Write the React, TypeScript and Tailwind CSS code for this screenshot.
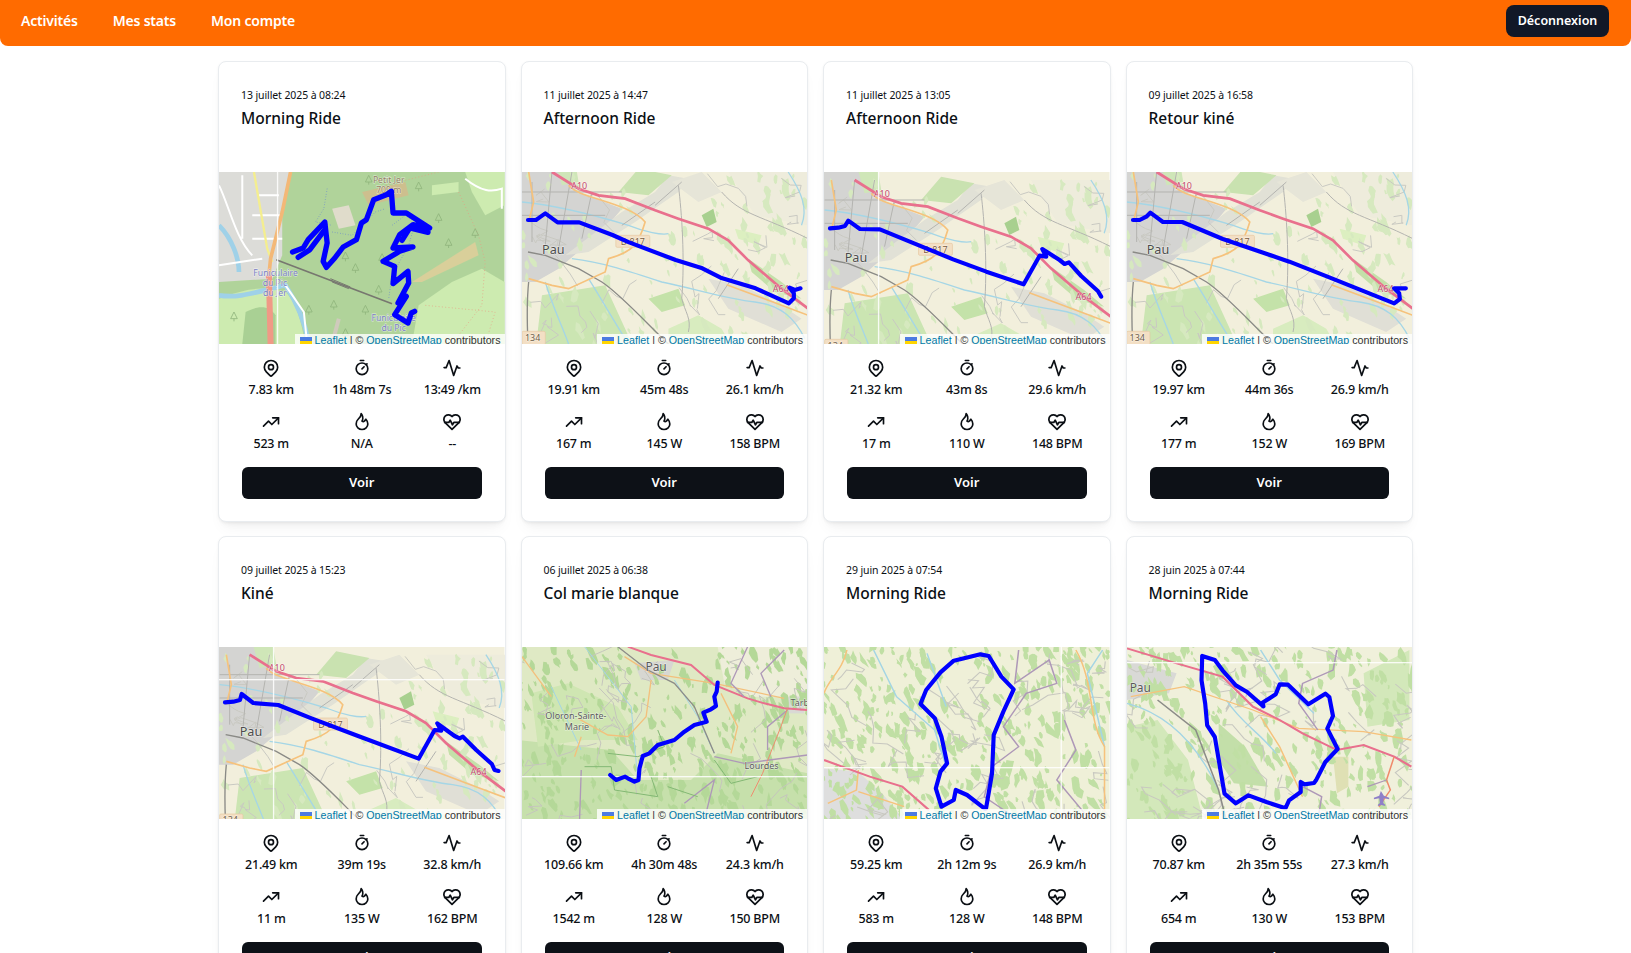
import type { ReactNode } from 'react'
import { TbFlame, TbMapPin, TbStopwatch, TbTrendingUp } from 'react-icons/tb'

const NAV = ['Activités', 'Mes stats', 'Mon compte']
const FONT = { fontFamily: '"Noto Sans", sans-serif' }

type Ride = {
  date: string
  title: string
  stats: string[]
  map: ReactNode
  track: string[]
  width?: number
  seams?: { x?: number; y?: number }
}

// petit générateur déterministe pour la texture des tuiles
function rng(seed: number) {
  let s = seed
  return () => {
    s = (s * 16807) % 2147483647
    return s / 2147483647
  }
}

function Texture({ seed, patches, lines, green = '#c6e2a8', line = '#cfcfc4' }: { seed: number; patches: number; lines: number; green?: string; line?: string }) {
  const r = rng(seed)
  // taches irrégulières plutôt que des ellipses
  const blobs = Array.from({ length: patches }, () => {
    const x = r() * 1000
    const y = r() * 560
    const size = 4 + r() * 12
    const slant = r() * 1.2 - 0.2
    const pts: string[] = []
    for (let k = 0; k < 8; k++) {
      const a = (k / 8) * Math.PI * 2
      const rad = size * (0.5 + r() * 0.9)
      const px = Math.cos(a) * rad * 0.7
      const py = Math.sin(a) * rad * 1.5
      pts.push(`${(x + px + py * slant * 0.5).toFixed(0)},${(y + py).toFixed(0)}`)
    }
    return pts.join(' ')
  })
  const wires = Array.from({ length: lines }, () => {
    let x = r() * 1000
    let y = r() * 560
    let d = `M${x.toFixed(0)} ${y.toFixed(0)}`
    for (let i = 0; i < 5; i++) {
      x += r() * 90 - 45
      y += r() * 70 - 20
      d += `L${x.toFixed(0)} ${y.toFixed(0)}`
    }
    return d
  })
  return (
    <g>
      {blobs.map((b, i) => (
        <polygon key={i} points={b} fill={green} />
      ))}
      {wires.map((d, i) => (
        <path key={i} d={d} fill="none" stroke={line} strokeWidth="3" />
      ))}
    </g>
  )
}

function Label({ x, y, children, size = 36, fill = '#5a5a5a' }: { x: number; y: number; children: ReactNode; size?: number; fill?: string }) {
  return (
    <text x={x} y={y} fontSize={size} fill={fill} textAnchor="middle" style={FONT} stroke="#ffffff" strokeOpacity="0.6" strokeWidth="3" paintOrder="stroke">
      {children}
    </text>
  )
}

// fond commun des sorties autour de Pau (coordonnées relevées à l'échelle x3)
function PauMap({ dx, dy, shield = true }: { dx: number; dy: number; shield?: boolean }) {
  return (
    <>
      <rect width="858" height="516" fill="#f2efdc" />
      <g transform={`translate(${dx} ${dy})`}>
        <g filter="url(#soft)">
          <path d="M-20 -40H90L170 60L300 110L250 170L110 290L40 330L-20 330Z" fill="#d4d4d2" />
          <path d="M300 120L400 60L440 10L500 20L470 60L340 150L200 240L130 250Z" fill="#e1e1d6" />
          <path d="M380 70L450 10L350 -10L290 60Z" fill="#c9e2b0" />
          <path d="M100 -30L160 -30L170 30L120 40Z" fill="#cfe6b8" />
          <path d="M540 130L575 110L585 150L555 165Z" fill="#a8d08f" />
          <path d="M640 170L720 190L710 220L650 200Z" fill="#dcefc0" />
          <path d="M680 260L780 330L840 380L760 360L690 300Z" fill="#c4e0a9" />
          <path d="M60 370L250 340L310 470L340 540L40 540Z" fill="#cbe5b2" />
          <path d="M440 470L530 430L600 470L640 540L440 540Z" fill="#d8ecbf" />
          <path d="M380 380L470 350L490 400L420 420Z" fill="#c4e2a9" />
          <path d="M560 320L660 340L780 400L840 440L780 480L620 410Z" fill="#e0dfd6" />
          <path d="M450 30L540 0L600 60L530 90Z" fill="#e6e5d8" />
          <path d="M620 0H858V160L700 130Z" fill="#eeecdc" />
          <Texture seed={71} patches={150} lines={26} green="#d6e9bf" line="#c9c9c2" />
          <g fill="none" stroke="#a5d6e6" strokeWidth="4">
            <path d="M0 90C100 100 220 130 320 160C370 180 420 190 440 185" />
            <path d="M150 260C240 270 330 300 420 330C520 350 610 380 700 390C780 400 820 440 850 500" />
            <path d="M200 320C250 400 290 470 320 516" />
            <path d="M70 330C90 400 120 460 140 516" />
            <path d="M800 0C840 60 860 110 840 160" />
          </g>
          <g fill="none" stroke="#b4b4b0" strokeWidth="3">
            <path d="M0 60H300M90 0L70 220M150 0L110 230M400 100L480 30M300 160L400 90M0 130H250M30 30L30 210M210 60L180 200" />
            <path d="M470 40C480 120 490 260 480 380C490 420 510 440 500 480" />
            <path d="M600 60C660 130 720 130 860 200" />
            <path d="M650 290L590 380" />
          </g>
          <path d="M18 240L70 250L170 290L240 330C300 370 380 460 440 516" fill="none" stroke="#8a8a86" strokeWidth="4" />
          <path d="M20 330C15 380 15 450 18 516" fill="none" stroke="#8a8a86" strokeWidth="4" />
          <g fill="none" stroke="#f6c27c" strokeWidth="5">
            <path d="M20 0L35 90L20 150" />
            <path d="M140 40C170 80 320 90 370 150C350 220 330 240 260 260L250 300L140 350L90 340L20 320" />
            <path d="M615 338L780 400L860 430L880 490" />
          </g>
          <path d="M90 0L170 50L230 70L310 80L400 115L470 140L560 170L620 205L680 265L780 350L860 410" fill="none" stroke="#e96f8d" strokeWidth="8" />
        </g>
        <Label x={94} y={245} size={38} fill="#4c4c4c">Pau</Label>
        <rect x="282" y="190" width="102" height="36" rx="4" fill="#f3dfc4" stroke="#e5c8a2" strokeWidth="2" />
        <Label x={333} y={220} size={27} fill="#7a5a3a">D 817</Label>
        <Label x={172} y={50} size={27} fill="#c2486b">A10</Label>
        <Label x={778} y={360} size={27} fill="#c2486b">A64</Label>
        {shield && (
          <>
            <rect x="0" y="478" width="70" height="40" rx="4" fill="#f3dfc4" stroke="#e5c8a2" strokeWidth="2" />
            <Label x={32} y={506} size={27} fill="#6a5a45">134</Label>
          </>
        )}
      </g>
    </>
  )
}

const TREES = [[450, 10], [600, 30], [660, 125], [770, 170], [690, 200], [410, 275], [380, 240], [490, 245], [480, 340], [345, 385], [440, 400], [380, 470], [270, 400], [45, 420]]

function JerMap() {
  return (
    <>
      <rect width="858" height="516" fill="#b0d39a" />
      <g filter="url(#soft)">
        <path d="M0 0H215L190 120L190 250L160 320L0 330Z" fill="#dcdcd8" />
        <path d="M858 330L858 516H580L600 400L700 330L790 290Z" fill="#cdebb0" />
        <path d="M580 330L770 210L780 250L610 330Z" fill="#d9cf9a" />
        <path d="M640 40L720 30L720 60L640 70Z" fill="#cdebb0" />
        <path d="M740 0H858V100L800 130L760 60Z" fill="#cdebb0" />
        <path d="M340 110L390 100L410 160L360 170Z" fill="#e0dccb" />
        <path d="M430 60L560 30L570 70L450 100Z" fill="#cdbf8e" />
        <path d="M0 380C80 350 130 340 200 360C240 400 250 470 260 516H0Z" fill="#cdebb0" />
        <path d="M80 420C120 400 150 400 170 430L170 516H70Z" fill="#a9d094" />
        <path d="M0 160C40 200 60 260 60 300M0 370C60 380 110 360 200 340C240 400 260 460 270 516" fill="none" stroke="#9fd1e8" strokeWidth="14" />
        <g fill="none" stroke="#ffffff" strokeWidth="6">
          <path d="M0 40C30 100 50 200 100 250M70 10V200M120 70H180M100 130H190M100 200H190M0 280L130 260M200 340L255 420L265 516" />
          <path d="M740 20C790 60 820 60 850 50V110" />
        </g>
        <path d="M105 0L145 230L160 270" fill="none" stroke="#f4ee8f" strokeWidth="7" />
        <path d="M215 0L190 120L155 260L150 310" fill="none" stroke="#f3b877" strokeWidth="11" />
        <path d="M150 310L155 516" fill="none" stroke="#f09a86" strokeWidth="18" />
        <path d="M172 263L520 395" fill="none" stroke="#77776f" strokeWidth="5" />
        <path d="M335 320L395 345M340 330L390 350" fill="none" stroke="#77776f" strokeWidth="3" />
        <g fill="none" stroke="#6f8fc9" strokeWidth="3" strokeDasharray="2 6">
          <path d="M325 50L315 110L290 150L340 160" />
          <path d="M340 180L400 190L420 170L470 120L500 110" />
          <path d="M520 160L560 130L590 150L570 220L520 310L510 380" />
        </g>
        <g fill="none" stroke="#e89a80" strokeWidth="2" strokeDasharray="3 7">
          <path d="M720 60L780 190L800 270L790 400L700 516" />
          <path d="M660 0L500 40M620 400L830 420L800 516" />
        </g>
        <path d="M360 440L340 516" fill="none" stroke="#cfcabc" strokeWidth="12" />
        <g fill="none" stroke="#8fb57c" strokeWidth="2.5">
          {TREES.map(([x, y]) => (
            <path key={`${x}-${y}`} d={`M${x} ${y}l-10 20h20zM${x} ${y + 20}v8`} />
          ))}
        </g>
      </g>
      <Label x={170} y={312} size={26} fill="#7a7fc4">Funiculaire</Label>
      <Label x={168} y={342} size={26} fill="#7a7fc4">du Pic</Label>
      <Label x={168} y={372} size={26} fill="#7a7fc4">du Jer</Label>
      <Label x={510} y={32} size={26} fill="#947f63">Petit Jer</Label>
      <Label x={510} y={62} size={26} fill="#947f63">709 m</Label>
      <Label x={525} y={448} size={26} fill="#7a7fc4">Funiculaire</Label>
      <Label x={525} y={478} size={26} fill="#7a7fc4">du Pic</Label>
    </>
  )
}

function ColMap() {
  return (
    <>
      <rect width="858" height="516" fill="#dfe9c4" />
      <g transform="translate(-12 -21)" filter="url(#soft)">
        <path d="M0 300L280 330L360 420L520 420L600 340L870 400V560H0Z" fill="#c6e0ab" />
        <path d="M40 160L150 130L300 200L360 300L200 300L60 320Z" fill="#cfe6b2" />
        <path d="M600 20H870V170L700 170L620 130Z" fill="#eeeeda" />
        <path d="M350 70L470 60L450 120L370 120Z" fill="#d7d7d2" />
        <path d="M810 170H860V220H810Z" fill="#d9d9d4" />
        <Texture seed={17} patches={420} lines={34} green="#b4d898" line="#c5c5bd" />
        <g fill="none" stroke="#a4d5e4" strokeWidth="3">
          <path d="M200 20L340 200L360 420M100 140L190 330M470 120L540 230L590 340" />
        </g>
        <g fill="none" stroke="#f3c07c" strokeWidth="4">
          <path d="M12 50L100 170M320 50L400 100L590 130L800 175M400 120L385 230L330 290L270 285L180 235M610 160L660 260L640 340M190 290L170 350" />
        </g>
        <path d="M300 20L390 90L470 130L530 200L590 340" fill="none" stroke="#8c8c88" strokeWidth="4" />
        <path d="M330 20L400 45L520 75L590 135L690 175L740 190L800 205L870 210" fill="none" stroke="#e96f8d" strokeWidth="6" />
        <g fill="none" stroke="#ae98b8" strokeWidth="4">
          <path d="M690 20L640 130L680 170M800 30L730 100L760 170M590 350L680 370L870 345M810 210L750 260L750 330M190 390L185 540M500 490L590 420L560 540" />
        </g>
        <g fill="none" stroke="#83b873" strokeWidth="3">
          <path d="M270 340L360 350L440 320L420 270M200 380H280L290 450L420 470L400 410M590 360L640 430L720 410M450 440L540 470" />
        </g>
        <path d="M810 205L790 260L735 400L700 470" fill="none" stroke="#ef8d6e" strokeWidth="3" />
      </g>
      <Label x={403} y={72}>Pau</Label>
      <Label x={162} y={216} size={27}>Oloron-Sainte-</Label>
      <Label x={165} y={250} size={27}>Marie</Label>
      <Label x={720} y={366} size={27}>Lourdes</Label>
      <Label x={835} y={178} size={27}>Tarb</Label>
    </>
  )
}

function LoopMapA() {
  return (
    <>
      <rect width="858" height="516" fill="#eff0d8" />
      <g transform="scale(1.147 1) translate(-10 -21)" filter="url(#soft)">
        <path d="M10 385L100 395L170 470L220 540H10Z" fill="#dedede" />
        <Texture seed={29} patches={560} lines={44} green="#c0dfa4" line="#c8c8c0" />
        <g fill="none" stroke="#a4d5e4" strokeWidth="4">
          <path d="M140 30L200 170L300 270L330 380M280 40L330 200M740 30L700 100L745 320" />
        </g>
        <g fill="none" stroke="#f6c27c" strokeWidth="4">
          <path d="M70 30C60 90 20 120 10 160M670 30C720 130 700 240 745 320V540M100 390L95 450L20 490M100 455L220 500" />
        </g>
        <path d="M10 360L130 410L215 440L285 510" fill="none" stroke="#e96f8d" strokeWidth="6" />
        <g fill="none" stroke="#ae98b8" strokeWidth="4">
          <path d="M520 30L510 130L600 60L620 130L540 160L480 260L520 320L450 380L430 470L520 540M640 240L670 330L620 420L700 530" />
        </g>
      </g>
    </>
  )
}

function LoopMapB() {
  return (
    <>
      <rect width="858" height="516" fill="#f0f0db" />
      <g transform="scale(1.147 1) translate(-800 -21)" filter="url(#soft)">
        <path d="M800 60L930 100L910 160L800 180Z" fill="#d9d9d6" />
        <path d="M1040 250L1110 320L1170 440L1080 430L1040 360Z" fill="#c3dfa9" />
        <path d="M800 260L880 240L960 360L1000 540H800Z" fill="#d3e8ba" />
        <path d="M1340 350L1380 350L1380 440L1350 460Z" fill="#dfe0b4" />
        <path d="M1420 100L1540 30V240L1430 260Z" fill="#d3e8ba" />
        <g transform="translate(800 0)">
          <Texture seed={53} patches={460} lines={44} green="#c0dfa4" line="#c8c8c0" />
        </g>
        <g fill="none" stroke="#a4d5e4" strokeWidth="4">
          <path d="M800 190C900 220 980 300 1040 450M1060 180C1100 250 1150 280 1190 340M1150 30L1200 120L1290 220" />
        </g>
        <g fill="none" stroke="#f6c27c" strokeWidth="4">
          <path d="M810 170L950 140L1130 210L1250 265L1420 275L1545 300M1150 230L1200 320L1260 470" />
        </g>
        <path d="M880 180L980 270L1040 450L1060 540" fill="none" stroke="#8c8c88" strokeWidth="4" />
        <path d="M800 25L930 70L1050 110L1130 200L1200 240L1260 280L1350 330L1420 315L1500 350L1545 380" fill="none" stroke="#e96f8d" strokeWidth="6" />
        <path d="M1500 350L1480 420L1490 450L1460 500" fill="none" stroke="#f08a6a" strokeWidth="4" />
        <g fill="none" stroke="#ae98b8" strokeWidth="4">
          <path d="M1350 30L1340 90L1260 130L1250 190L1300 270M1260 440L1310 470L1300 540M1430 440L1480 420" />
        </g>
      </g>
      <Label x={40} y={136} size={36}>Pau</Label>
      <path d="M763 432l-5 14-16 6v5l16-3 2 14-6 5v4l11-3 11 3v-4l-6-5 2-14 16 3v-5l-16-6z" fill="#8f7fc8" />
    </>
  )
}

const RIDES: Ride[] = [
  {
    date: '13 juillet 2025 à 08:24',
    title: 'Morning Ride',
    stats: ['7.83 km', '1h 48m 7s', '13:49 /km', '523 m', 'N/A', '--'],
    map: <JerMap />,
    seams: { x: 58 },
    width: 16,
    track: [
      '221,240 253,228 268,203 318,150 325,213 313,268 323,286 348,258 373,225 413,203 428,153 443,143 465,83 503,68 518,58 523,123 563,123 633,168 583,158 543,188 523,228 583,225 543,238 493,268 528,283 523,335 568,298 570,333 538,393 563,373 528,428 568,453 578,423 588,418',
      '238,256 273,233 318,173',
      '628,181 573,168 550,205',
    ],
  },
  {
    date: '11 juillet 2025 à 14:47',
    title: 'Afternoon Ride',
    stats: ['19.91 km', '45m 48s', '26.1 km/h', '167 m', '145 W', '158 BPM'],
    map: <PauMap dx={0} dy={0} />,
    track: ['18,144 42,144 52,137 70,124 107,151 172,151 272,189 322,211 462,264 542,289 597,317 702,349 802,394 817,379 817,364 804,347 820,354 837,349'],
  },
  {
    date: '11 juillet 2025 à 13:05',
    title: 'Afternoon Ride',
    stats: ['21.32 km', '43m 8s', '29.6 km/h', '17 m', '110 W', '148 BPM'],
    map: <PauMap dx={2} dy={24} />,
    seams: { x: 54 },
    track: ['18,169 43,167 63,162 73,146 108,171 168,172 278,217 388,262 488,299 600,337 648,251 668,254 656,231 708,264 723,276 736,271 773,312 823,357 833,374'],
  },
  {
    date: '09 juillet 2025 à 16:58',
    title: 'Retour kiné',
    stats: ['19.97 km', '44m 36s', '26.9 km/h', '177 m', '152 W', '169 BPM'],
    map: <PauMap dx={-1} dy={0} />,
    track: ['18,144 38,144 58,134 70,122 108,150 166,150 288,201 488,269 608,316 803,394 820,381 818,364 803,349 838,349'],
  },
  {
    date: '09 juillet 2025 à 15:23',
    title: 'Kiné',
    stats: ['21.49 km', '39m 19s', '32.8 km/h', '11 m', '135 W', '162 BPM'],
    map: <PauMap dx={2} dy={23} />,
    seams: { x: 54, y: 32 },
    track: ['18,166 43,164 63,159 68,141 103,168 178,174 278,214 418,267 600,335 648,249 668,251 656,229 708,267 723,274 733,269 773,309 820,351 828,369 840,372'],
  },
  {
    date: '06 juillet 2025 à 06:38',
    title: 'Col marie blanque',
    stats: ['109.66 km', '4h 30m 48s', '24.3 km/h', '1542 m', '128 W', '150 BPM'],
    map: <ColMap />,
    seams: { y: 129 },
    track: ['588,107 585,134 578,149 583,177 568,187 545,197 555,224 518,234 488,254 458,279 408,294 383,319 363,327 353,364 350,399 338,404 318,394 310,389 283,399 265,384'],
  },
  {
    date: '29 juin 2025 à 07:54',
    title: 'Morning Ride',
    stats: ['59.25 km', '2h 12m 9s', '26.9 km/h', '583 m', '128 W', '148 BPM'],
    map: <LoopMapA />,
    seams: { x: 237, y: 120 },
    track: ['353,479 336,424 350,374 370,349 353,269 333,214 290,171 307,129 350,76 390,41 470,22 495,27 533,89 570,127 539,194 510,264 505,379 487,484 482,484 430,444 396,429 390,459 353,479'],
  },
  {
    date: '28 juin 2025 à 07:44',
    title: 'Morning Ride',
    stats: ['70.87 km', '2h 35m 55s', '27.3 km/h', '654 m', '130 W', '153 BPM'],
    map: <LoopMapB />,
    seams: { y: 15 },
    track: ['226,27 264,39 287,70 327,115 361,135 410,178 407,167 447,142 459,112 484,113 545,172 596,140 608,150 619,207 602,245 633,306 596,345 568,400 562,408 533,412 522,405 522,435 487,460 476,484 419,465 365,445 327,469 293,440 281,370 264,270 241,235 235,170 224,100 226,27'],
  },
]

function PulseIcon() {
  return (
    <svg width="20" height="20" viewBox="0 0 24 24" fill="none" stroke="currentColor" strokeWidth="2" strokeLinecap="round" strokeLinejoin="round">
      <path d="M2.5 11.5h2.5L8.5 3l5.5 18L18 9.5l1.5 2.5h2" />
    </svg>
  )
}

function HeartPulseIcon() {
  return (
    <svg width="22" height="22" viewBox="0 0 24 24" fill="none" stroke="currentColor" strokeWidth="1.9" strokeLinecap="round" strokeLinejoin="round" className="-mx-[1px] -my-[1px]">
      <path d="M19.5 12.6L12 20l-7.5-7.4A5 5 0 1 1 12 6a5 5 0 1 1 7.5 6.6" />
      <path d="M4 12.5h4.5l1.5-2.5 2.5 5 1.5-2.5h6" />
    </svg>
  )
}

const ICONS = [
  <TbMapPin size={20} />,
  <TbStopwatch size={20} />,
  <PulseIcon />,
  <TbTrendingUp size={20} />,
  <TbFlame size={20} />,
  <HeartPulseIcon />,
]

function RideMap({ ride }: { ride: Ride }) {
  return (
    <div className="relative h-[172px] overflow-hidden">
      <svg viewBox="0 0 858 516" preserveAspectRatio="none" className="block w-full h-full">
        <defs>
          <filter id="soft" x="-5%" y="-5%" width="110%" height="110%">
            <feGaussianBlur stdDeviation="1.1" />
          </filter>
        </defs>
        {ride.map}
        {ride.seams?.x !== undefined && <rect x={ride.seams.x * 3} y="0" width="4" height="516" fill="#ffffff" opacity="0.85" />}
        {ride.seams?.y !== undefined && <rect x="0" y={ride.seams.y * 3} width="858" height="4" fill="#ffffff" opacity="0.85" />}
        {ride.track.map((points) => (
          <polyline key={points} points={points} fill="none" stroke="#0000ff" strokeWidth={ride.width ?? 12.5} strokeLinejoin="round" strokeLinecap="round" />
        ))}
      </svg>
      <div className="absolute right-0 bottom-[-3px] flex items-center bg-white/80 pl-[5px] pr-[4px] font-['Liberation_Sans',sans-serif] text-[10.7px] leading-[13px] text-[#333333] whitespace-pre">
        <svg width="12" height="8" viewBox="0 0 12 8" className="mr-[3px]">
          <rect width="12" height="4" fill="#4c7be1" />
          <rect y="4" width="12" height="4" fill="#ffd500" />
        </svg>
        <span className="text-[#0078a8]">Leaflet</span>
        <span> | © </span>
        <span className="text-[#0078a8]">OpenStreetMap</span>
        <span> contributors</span>
      </div>
    </div>
  )
}

function RideCard({ ride }: { ride: Ride }) {
  return (
    <div className="bg-white rounded-lg border border-[#e9ecef] shadow-[0_1px_3px_rgba(0,0,0,0.05),0_10px_15px_-5px_rgba(0,0,0,0.05),0_7px_7px_-5px_rgba(0,0,0,0.04)] overflow-hidden text-[#0b0f14]">
      <div className="h-[110px] px-[22px] pt-[25px]">
        <div className="text-[10.5px] leading-[17px] tracking-[-0.1px]">{ride.date}</div>
        <div className="mt-[2px] text-[15.5px] leading-[24px] font-medium">{ride.title}</div>
      </div>
      <RideMap ride={ride} />
      <div className="grid grid-cols-3 gap-y-[12px] px-[7px] pt-[14px]">
        {ride.stats.map((value, i) => (
          <div key={i} className="flex flex-col items-center">
            {ICONS[i]}
            <span className="mt-[1px] text-[12.5px] leading-[21px] font-medium tracking-[-0.2px] whitespace-nowrap">{value}</span>
          </div>
        ))}
      </div>
      <div className="px-[23px] pt-[13px] pb-[22px]">
        <button className="w-full h-[32px] rounded-md bg-[#0d1117] text-white text-[13px] font-semibold">Voir</button>
      </div>
    </div>
  )
}

export default function App() {
  return (
    <div className="h-screen overflow-hidden bg-white" style={FONT}>
      <header className="h-[46px] flex items-center justify-between pl-[21px] pr-[22px] bg-[#ff6b00] rounded-b-lg">
        <nav className="flex gap-[35px] -mt-[5px]">
          {NAV.map((item) => (
            <a key={item} className="text-white text-[14px] font-semibold tracking-[-0.2px]">{item}</a>
          ))}
        </nav>
        <button className="w-[103px] h-[32px] -mt-[4px] rounded-lg bg-[#111827] text-white text-[12.5px] font-semibold">Déconnexion</button>
      </header>
      <main className="w-[1195px] mx-auto pt-[15px] grid grid-cols-4 gap-x-[15px] gap-y-[14px] items-start">
        {RIDES.map((ride) => (
          <RideCard key={ride.date} ride={ride} />
        ))}
      </main>
    </div>
  )
}
